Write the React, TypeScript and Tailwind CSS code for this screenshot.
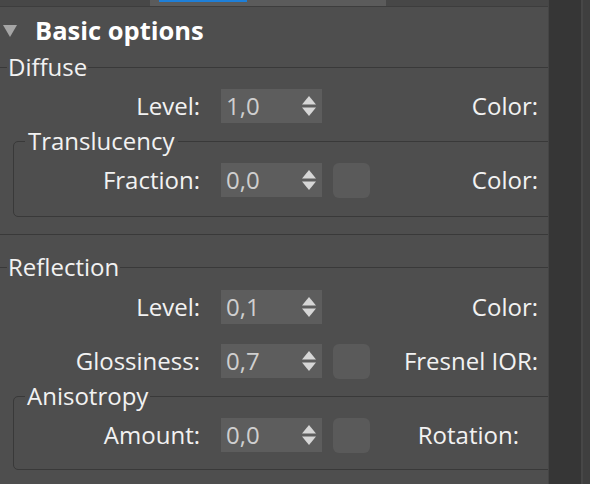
import React from "react";

const FONT = { fontFamily: '"Open Sans", "Noto Sans", sans-serif' };

function Spinner({ value }: { value: string }) {
  return (
    <div className="w-[101px] h-[34px] bg-[#5d5d5d] flex items-center justify-between pl-[5px] pr-[6px] shrink-0">
      <span className="text-[#cfcfcf]">{value}</span>
      <svg width="14" height="22" viewBox="0 0 14 22">
        <polygon points="7,1 14,9.5 0,9.5" fill="#d6d6d6" />
        <polygon points="0,12.5 14,12.5 7,21" fill="#d6d6d6" />
      </svg>
    </div>
  );
}

function Row({
  label,
  labelW,
  value,
  swatch,
  right,
  rightW = 168,
  className = "",
}: {
  label: string;
  labelW: number;
  value: string;
  swatch?: boolean;
  right: string;
  rightW?: number;
  className?: string;
}) {
  return (
    <div className={"flex items-center h-[34px] whitespace-nowrap " + className}>
      <div className="text-right text-[#f2f2f2] shrink-0" style={{ width: labelW }}>
        {label}
      </div>
      <div className="w-[21px] shrink-0" />
      <Spinner value={value} />
      <div className="w-[11px] shrink-0" />
      <div
        className={
          "w-[37px] h-[35px] rounded-[6px] shrink-0 " + (swatch ? "bg-[#5a5a5a]" : "")
        }
      />
      <div className="text-right text-[#f2f2f2] shrink-0" style={{ width: rightW }}>
        {right}
      </div>
    </div>
  );
}

export default function App() {
  return (
    <div
      className="w-[590px] h-[484px] flex bg-[#414141] overflow-hidden text-[24px] leading-[28px]"
      style={FONT}
    >
      <div className="w-[549px] shrink-0 flex flex-col bg-[#4e4e4e] overflow-hidden border-r border-[#454545]">
        {/* top strip */}
        <div className="h-[7px] flex border-b border-[#3d3d3d] shrink-0">
          <div className="w-[150px] bg-[#474747]" />
          <div className="w-[236px] bg-[#5b5b5b] pl-[9px]">
            <div className="w-[88px] h-[2px] bg-[#1e7fd8]" />
          </div>
          <div className="flex-1 bg-[#474747]" />
        </div>

        {/* header */}
        <div className="h-[46px] flex items-center shrink-0">
          <svg width="14" height="12" viewBox="0 0 14 12" className="ml-[3px] mt-[1px]">
            <polygon points="0,0 14,0 7,12" fill="#a6a6a6" />
          </svg>
          <span className="ml-[18px] font-bold text-[25.5px] text-white">Basic options</span>
        </div>

        {/* Diffuse */}
        <fieldset className="border-t border-[#393939] shrink-0 min-w-0">
          <legend className="ml-[7px] px-px text-[#f2f2f2]">Diffuse</legend>
          <Row label="Level:" labelW={200} value="1,0" right="Color:" className="mt-[8px]" />
          <fieldset className="ml-[13px] w-[560px] mt-[4px] border border-[#393939] rounded-[5px] pb-[19px] min-w-0">
            <legend className="ml-[11px] px-[3px] text-[#f2f2f2]">Translucency</legend>
            <Row
              label="Fraction:"
              labelW={186}
              value="0,0"
              swatch
              right="Color:"
              className="mt-[8px]"
            />
          </fieldset>
        </fieldset>

        <div className="mt-[17px] h-px bg-[#393939] shrink-0" />

        {/* Reflection */}
        <fieldset className="mt-[18px] border-t border-[#393939] shrink-0 min-w-0">
          <legend className="ml-[7px] px-px text-[#f2f2f2]">Reflection</legend>
          <Row label="Level:" labelW={200} value="0,1" right="Color:" className="mt-[9px]" />
          <Row
            label="Glossiness:"
            labelW={200}
            value="0,7"
            swatch
            right="Fresnel IOR:"
            className="mt-[20px]"
          />
          <fieldset className="ml-[13px] w-[560px] mt-[4px] border border-[#393939] rounded-[5px] pb-[17px] min-w-0">
            <legend className="ml-[11px] px-[2px] text-[#f2f2f2]">Anisotropy</legend>
            <Row
              label="Amount:"
              labelW={186}
              value="0,0"
              swatch
              right="Rotation:"
              rightW={149}
              className="mt-[8px]"
            />
          </fieldset>
        </fieldset>
      </div>
      <div className="w-[32px] shrink-0 bg-[#363636]" />
      <div className="w-[2px] shrink-0 bg-[#474747]" />
      <div className="flex-1 bg-[#3f3f3f]" />
    </div>
  );
}
